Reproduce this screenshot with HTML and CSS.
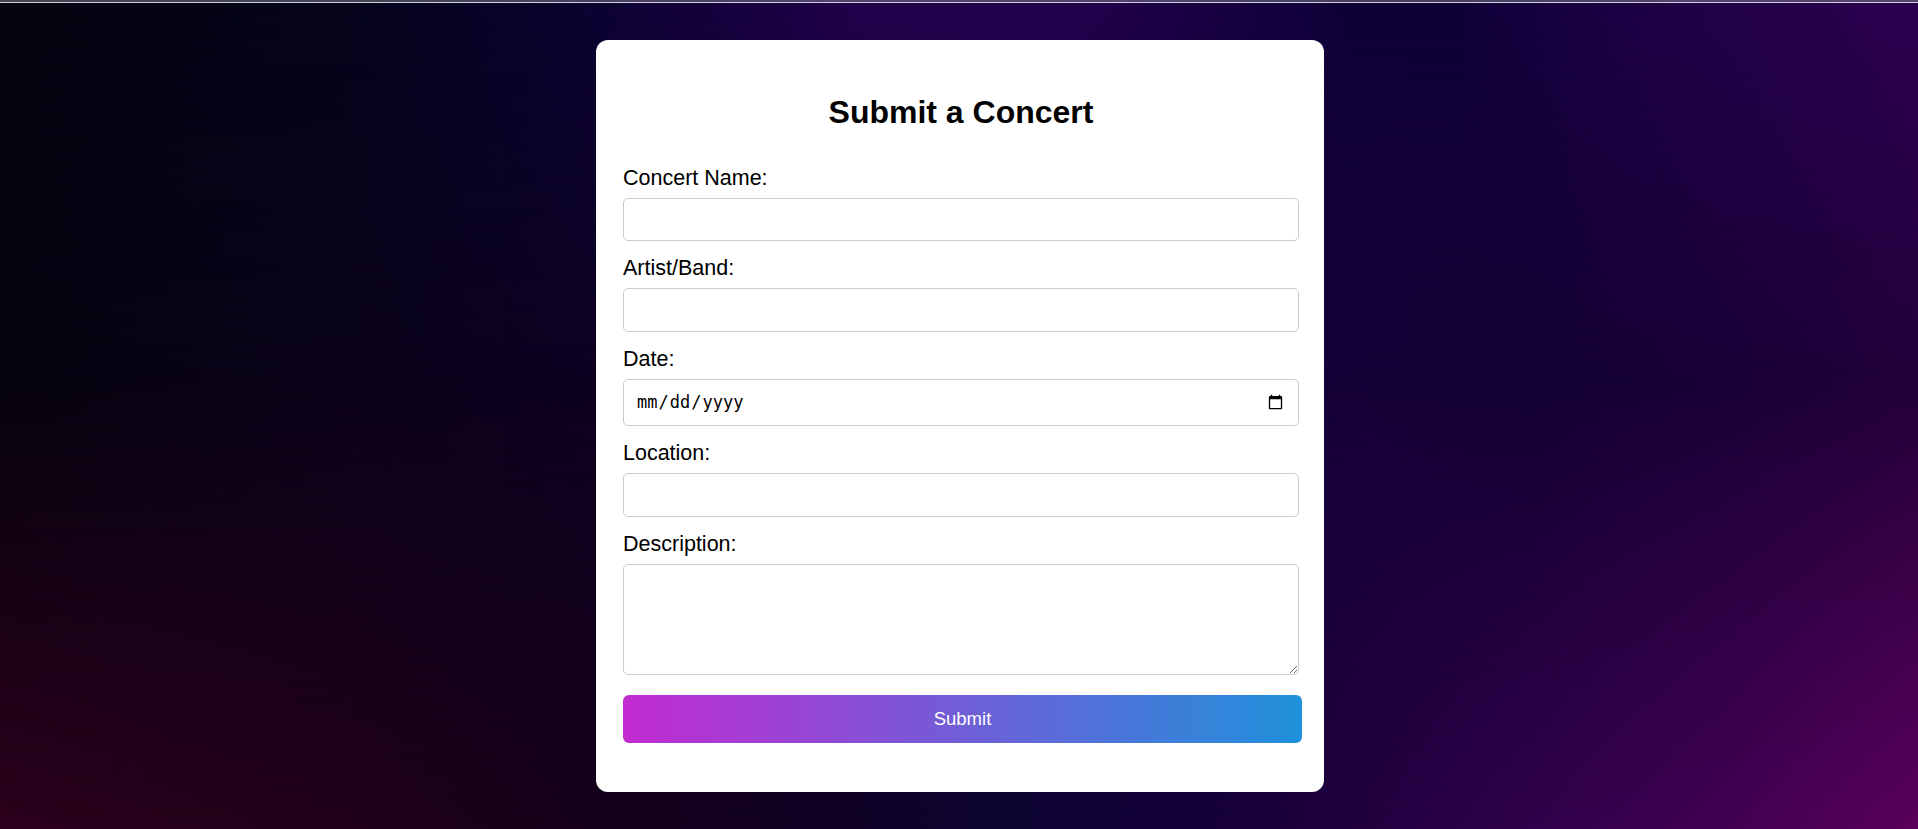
FILE: index.html
```html
<!DOCTYPE html>
<html lang="en">
<head>
<meta charset="utf-8">
<title>Submit a Concert</title>
<link rel="stylesheet" href="styles.css">
</head>
<body>
<div class="topbar"></div>
<main class="page">
  <section class="card">
    <h1 class="title">Submit a Concert</h1>
    <form class="form">
      <label class="label" for="name">Concert Name:</label>
      <input class="field" id="name" type="text">
      <label class="label" for="artist">Artist/Band:</label>
      <input class="field" id="artist" type="text">
      <label class="label" for="date">Date:</label>
      <input class="field field-date" id="date" type="date">
      <label class="label" for="location">Location:</label>
      <input class="field" id="location" type="text">
      <label class="label" for="desc">Description:</label>
      <textarea class="field field-area" id="desc"></textarea>
      <button class="submit" type="button">Submit</button>
    </form>
  </section>
</main>
</body>
</html>
```

FILE: styles.css
```css
html, body {
  margin: 0;
  height: 100%;
}

body {
  font-family: "Liberation Sans", Arial, sans-serif;
  overflow: hidden;
  position: relative;
  background: linear-gradient(90deg,
    #05030e 0%, #0a0318 15%, #0e0220 31%, #120228 40%,
    #140232 55%, #160038 69%, #130032 80%, #1a0036 92%, #220038 100%);
}

body::before,
body::after {
  content: "";
  position: fixed;
  inset: 0;
  z-index: -1;
  pointer-events: none;
}

body::before {
  background: linear-gradient(90deg,
    #04040f 0%, #04031a 18%, #0a0330 30%, #16003e 38%, #22004c 45%,
    #24004e 55%, #1a0044 62%, #0e0038 70%, #0e0038 76%, #1c0044 84%, #2c0050 100%);
  -webkit-mask-image: linear-gradient(to bottom, #000 0%, transparent 50%);
  mask-image: linear-gradient(to bottom, #000 0%, transparent 50%);
}

body::after {
  background: linear-gradient(90deg,
    #2c001c 0%, #200018 18%, #16001a 30%, #120020 40%, #0c0430 52%,
    #14003a 62%, #20003e 70%, #30004a 80%, #420052 90%, #5a005c 100%);
  -webkit-mask-image: linear-gradient(to top, #000 0%, transparent 55%);
  mask-image: linear-gradient(to top, #000 0%, transparent 55%);
}

.topbar {
  height: 3px;
  background: linear-gradient(to bottom, rgba(120, 122, 140, 0.55) 0 2px, rgba(230, 230, 235, 0.9) 2px 3px);
}

.page {
  display: flex;
  justify-content: center;
  padding: 37px 0 0 2px;
}

.card {
  width: 728px;
  box-sizing: border-box;
  background: #fff;
  border-radius: 12px;
  padding: 24px 25px 49px 27px;
}

.title {
  margin: 29.5px 0 35.2px;
  font-size: 32px;
  line-height: 37px;
  font-weight: bold;
  text-align: center;
  color: #000;
}

.form {
  display: flex;
  flex-direction: column;
}

.label {
  font-size: 21.5px;
  line-height: 24px;
  margin-bottom: 8px;
  color: #000;
}

.field {
  display: block;
  width: 100%;
  height: 43.5px;
  box-sizing: border-box;
  margin: 0 0 15px;
  padding: 0 12px;
  border: 1px solid #cccccc;
  border-radius: 5px;
  background: #fff;
  font-family: "Liberation Sans", Arial, sans-serif;
  font-size: 16px;
  color: #000;
}

.field-date {
  height: 47.6px;
  font-family: "DejaVu Sans Mono", monospace;
  font-size: 17px;
}

.field-area {
  height: 111.6px;
  margin-bottom: 20px;
  padding: 12px;
  resize: vertical;
}

.submit {
  width: calc(100% + 3px);
  height: 48px;
  border: 0;
  border-radius: 6px;
  background: linear-gradient(90deg, #c22bd0 0%, #1f91db 100%);
  color: #fff;
  font-family: "Liberation Sans", Arial, sans-serif;
  font-size: 18.5px;
  cursor: pointer;
}
```
